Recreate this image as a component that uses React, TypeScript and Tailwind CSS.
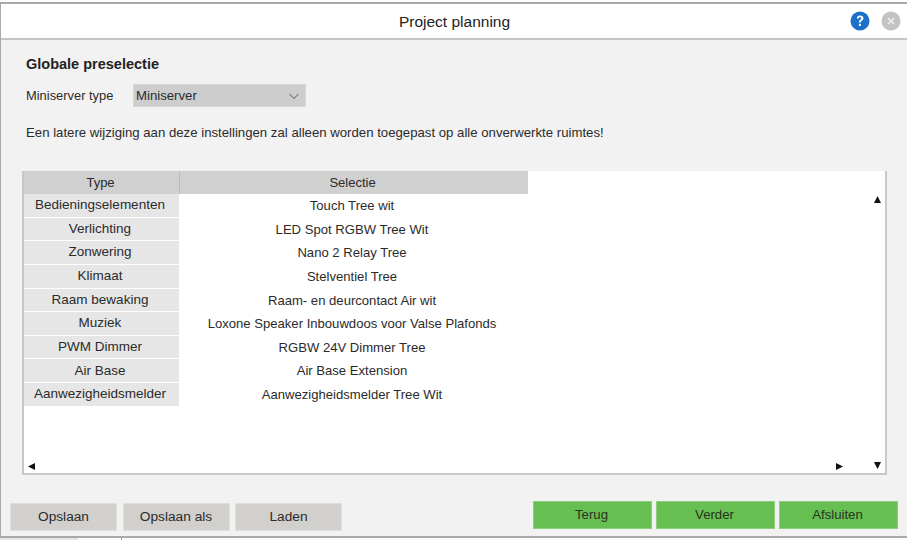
const rows = [
  ["Bedieningselementen", "Touch Tree wit"],
  ["Verlichting", "LED Spot RGBW Tree Wit"],
  ["Zonwering", "Nano 2 Relay Tree"],
  ["Klimaat", "Stelventiel Tree"],
  ["Raam bewaking", "Raam- en deurcontact Air wit"],
  ["Muziek", "Loxone Speaker Inbouwdoos voor Valse Plafonds"],
  ["PWM Dimmer", "RGBW 24V Dimmer Tree"],
  ["Air Base", "Air Base Extension"],
  ["Aanwezigheidsmelder", "Aanwezigheidsmelder Tree Wit"],
];

function GreyButton({ label }: { label: string }) {
  return (
    <button className="w-[107px] h-[28px] pt-[1px] bg-[#d1d0cc] border border-[#dededb] text-[13.7px] text-[#2b2b2b]">
      {label}
    </button>
  );
}

function GreenButton({ label }: { label: string }) {
  return (
    <button className="w-[119px] h-[28px] pr-[2px] bg-[#66bf50] border border-[#8ccf7a] text-[13.2px] text-[#26331f]">
      {label}
    </button>
  );
}

export default function App() {
  return (
    <div className="w-[907px] h-[540px] bg-white overflow-hidden flex flex-col font-['Liberation_Sans',Arial,sans-serif] text-[#2b2b2b]">
      <div className="h-[2px] bg-white" />
      <div className="h-[536px] flex flex-col border-t-2 border-b-2 border-l border-[#a9a9a9] bg-[#f2f2f2]">
        <header className="h-[36px] shrink-0 bg-white border-b-2 border-[#c4c4c4] flex items-center relative">
          <h1 className="w-full text-center text-[15.5px] leading-none text-[#222] pt-[1px] pl-[1px]">Project planning</h1>
          <div className="absolute right-[6px] top-[7px] flex items-center gap-[11px]">
            <svg width="20" height="20" viewBox="0 0 20 20" className="-ml-[1px]">
              <circle cx="10" cy="10" r="9.500" fill="#1c70c8" />
              <path d="M6.800 7.600c.1-2 1.500-3.100 3.400-3.100 1.900 0 3.200 1.100 3.200 2.700 0 1.300-.8 1.900-1.600 2.500-.7.5-1 .8-1 1.800H8.900c0-1.500.5-2.100 1.300-2.700.7-.5 1.100-.9 1.100-1.500 0-.7-.5-1.100-1.200-1.100-.8 0-1.300.5-1.400 1.400z" fill="#fff" />
              <rect x="8.900" y="12.800" width="2" height="2.200" fill="#fff" />
            </svg>
            <svg width="20" height="20" viewBox="0 0 20 20">
              <circle cx="10" cy="10" r="9.500" fill="#c3c3c3" />
              <path d="M7 7l6 6M13 7l-6 6" stroke="#f0f0f0" strokeWidth="1.600" />
            </svg>
          </div>
        </header>

        <main className="flex-1 min-h-0 flex flex-col pl-[25px] pr-[20px]">
          <h2 className="mt-[15px] text-[14.5px] leading-[18px] font-bold text-[#222]">Globale preselectie</h2>
          <div className="mt-[11px] flex items-center h-[23px]">
            <span className="w-[107px] text-[12.9px]">Miniserver type</span>
            <div className="w-[173px] h-[23px] bg-[#cdcdcd] border border-[#d6d6d6] flex items-center justify-between pl-[2px] pr-[4px] text-[13.2px]">
              <span>Miniserver</span>
              <svg width="14" height="14" viewBox="0 0 14 14" fill="none" stroke="#555" strokeWidth="1">
                <path d="M2.500 5l4.500 4.500L11.500 5" />
              </svg>
            </div>
          </div>
          <p className="mt-[19px] text-[13.2px] leading-[14px]">
            Een latere wijziging aan deze instellingen zal alleen worden toegepast op alle onverwerkte ruimtes!
          </p>

          <div className="relative mt-[31px] -ml-[4px] w-[865px] h-[304px] bg-white border-l-2 border-r-2 border-b-2 border-[#c8c8c8]">
            <div className="flex w-[504px] h-[23px]">
              <div className="w-[156px] bg-[#d0d0d0] border-r border-[#bdbdbd] flex items-center justify-center pr-[2px] text-[13px]">Type</div>
              <div className="w-[348px] bg-[#d0d0d0] flex items-center justify-center pr-[3px] text-[13px]">Selectie</div>
            </div>
            {rows.map(([type, selection]) => (
              <div key={type} className="flex h-[23.65px]">
                <div className="w-[155px] bg-[#e6e6e6] border-b border-white flex items-center justify-center pr-[3px] text-[13.5px]">{type}</div>
                <div className="w-[349px] flex items-center justify-center pr-[3px] text-[13.1px]">{selection}</div>
              </div>
            ))}
            <svg className="absolute right-[4px] top-[25px]" width="7" height="7" viewBox="0 0 7 7"><path d="M3.500 0L7 7H0z" fill="#111" /></svg>
            <svg className="absolute right-[4px] bottom-[4px]" width="7" height="7" viewBox="0 0 7 7"><path d="M0 0h7L3.500 7z" fill="#111" /></svg>
            <svg className="absolute right-[42px] bottom-[3px]" width="7" height="7" viewBox="0 0 7 7"><path d="M0 0l7 3.500L0 7z" fill="#111" /></svg>
            <svg className="absolute left-[4px] bottom-[3px]" width="7" height="7" viewBox="0 0 7 7"><path d="M7 0L0 3.500 7 7z" fill="#111" /></svg>
          </div>

          <div className="mt-[26px] -ml-[16px] -mr-[11px] flex items-start justify-between">
            <div className="flex gap-[5.5px] pt-[2px]">
              <GreyButton label="Opslaan" />
              <GreyButton label="Opslaan als" />
              <GreyButton label="Laden" />
            </div>
            <div className="flex gap-[4px]">
              <GreenButton label="Terug" />
              <GreenButton label="Verder" />
              <GreenButton label="Afsluiten" />
            </div>
          </div>
        </main>
      </div>
      <div className="h-[2px] flex">
        <div className="w-[78px] bg-[#e4e4e4]" />
        <div className="w-[44px] bg-white border-r border-[#9a9a9a]" />
      </div>
    </div>
  );
}
